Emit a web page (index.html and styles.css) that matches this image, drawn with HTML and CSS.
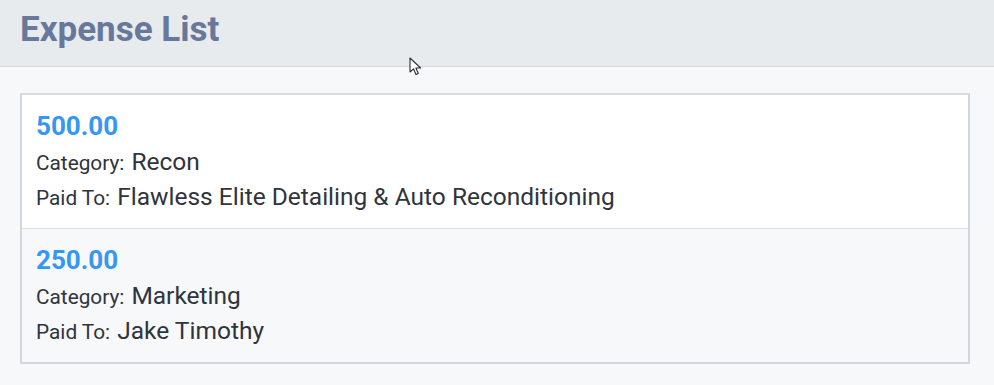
FILE: index.html
```html
<!DOCTYPE html>
<html lang="en">
<head>
  <meta charset="UTF-8" />
  <meta name="viewport" content="width=device-width, initial-scale=1.0"/>
  <title>Expense List</title>
  <link rel="stylesheet" href="styles.css">
</head>
<body>
  <header class="page-header">
    <h1>Expense List</h1>
  </header>

  <main class="content">
    <div class="expense-list">
      <div class="expense">
        <div class="amount">500.00</div>
        <div class="field"><span class="label">Category:</span> Recon</div>
        <div class="field"><span class="label">Paid To:</span> Flawless Elite Detailing &amp; Auto Reconditioning</div>
      </div>
      <div class="expense">
        <div class="amount">250.00</div>
        <div class="field"><span class="label">Category:</span> Marketing</div>
        <div class="field"><span class="label">Paid To:</span> Jake Timothy</div>
      </div>
    </div>
  </main>

  <!-- mouse pointer from the capture -->
  <svg class="cursor" width="14" height="20" viewBox="0 0 14 20">
    <path d="M1 1 L1 15 L4.5 11.8 L7 17.5 L9.3 16.5 L6.9 11 L11.6 11 Z" fill="#fff" stroke="#2a2e38" stroke-width="1.1" stroke-linejoin="round"/>
  </svg>
</body>
</html>
```

FILE: styles.css
```css
* {
  box-sizing: border-box;
  margin: 0;
  padding: 0;
}

body {
  font-family: Roboto, 'Liberation Sans', sans-serif;
  background: #f7f8fa;
  color: #2f343d;
  position: relative;
  min-height: 100vh;
}

.page-header {
  background: #e8ebee;
  border-bottom: 1px solid #d3d8df;
  height: 67px;
  padding: 12px 20px 0;
}

.page-header h1 {
  font-size: 35px;
  line-height: 35px;
  font-weight: 700;
  color: #67789b;
}

.content {
  padding: 26px 24px 20px 20px;
}

.expense-list {
  border: 2px solid #d3d7dc;
  border-top-color: #dcdcdc;
}

.expense {
  padding: 14px 14px 14px;
  background: #f7f8fa;
}

.expense:first-child {
  background: #fff;
}

.expense + .expense {
  border-top: 1px solid #dcdfe3;
}

.amount {
  font-size: 26px;
  line-height: 35px;
  font-weight: 700;
  color: #3697f3;
}

.field {
  font-size: 24.5px;
  line-height: 35px;
}

.label {
  font-size: 20.8px;
  line-height: 20px;
  margin-right: 1px;
}

.cursor {
  position: absolute;
  left: 409px;
  top: 57px;
}
```
